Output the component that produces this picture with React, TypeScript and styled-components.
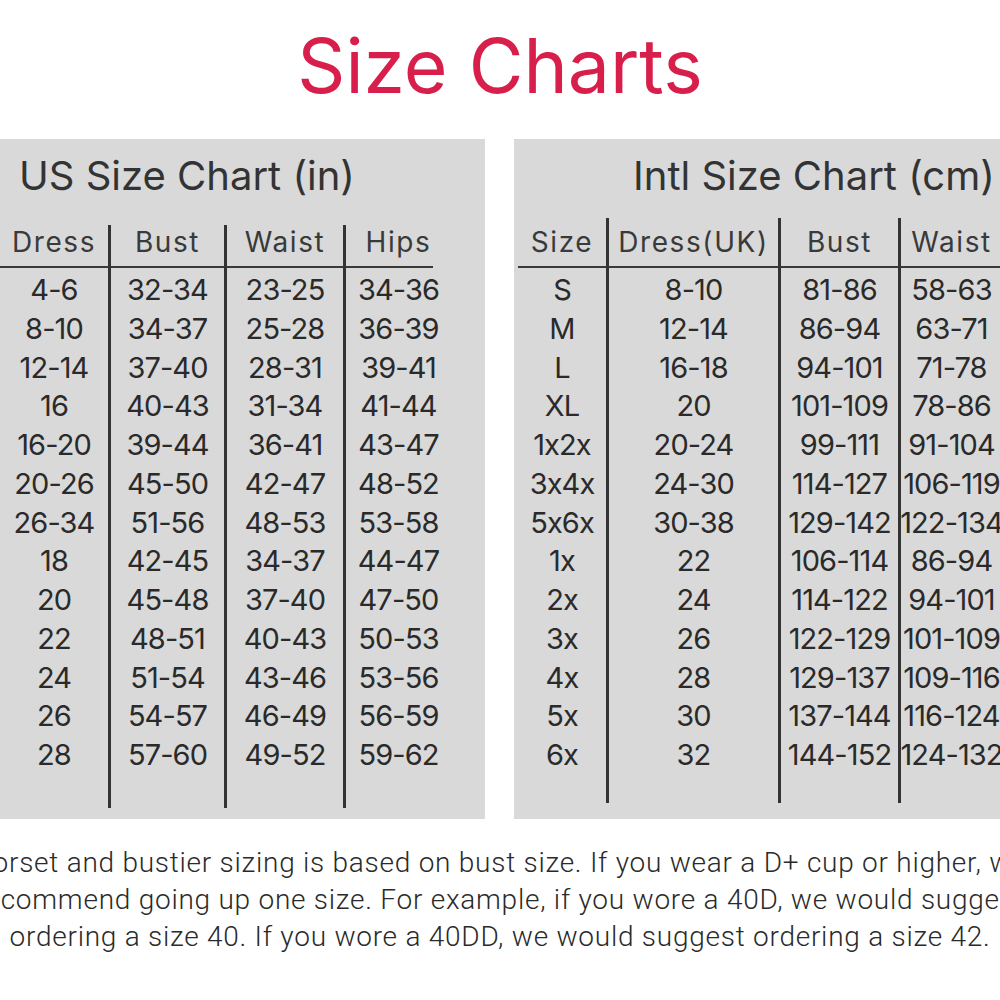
import React from "react";
import styled, { createGlobalStyle } from "styled-components";

const Global = createGlobalStyle`
  html, body { margin: 0; padding: 0; background: #ffffff; }
  * { box-sizing: border-box; }
`;

const Page = styled.div`
  width: 1000px;
  height: 1000px;
  overflow: hidden;
  background: #ffffff;
  display: flex;
  flex-direction: column;
  font-family: Inter, "Open Sans", sans-serif;
  font-feature-settings: "calt" 0;
  color: #2e2e2e;
`;

const Title = styled.h1`
  margin: 0;
  height: 139px;
  padding-top: 28px;
  text-align: center;
  font-family: Inter, sans-serif;
  font-weight: 400;
  font-size: 75px;
  line-height: 1;
  color: #d81f4c;
`;

const Charts = styled.div`
  display: flex;
  gap: 29px;
  height: 680px;
`;

const Panel = styled.section<{ $w: number; $pad: number }>`
  flex: none;
  width: ${(p) => p.$w}px;
  height: 680px;
  background: #d9d9d9;
  overflow: hidden;
  display: flex;
  flex-direction: column;
  padding-left: ${(p) => p.$pad}px;
`;

const Heading = styled.h2<{ $indent: number }>`
  margin: 0;
  padding-top: 12px;
  padding-left: ${(p) => p.$indent}px;
  font-weight: 400;
  font-size: 40px;
  line-height: 50px;
  white-space: nowrap;
  color: #333333;
`;

const Table = styled.div<{ $top: number }>`
  display: flex;
  margin-top: ${(p) => p.$top}px;
`;

const Column = styled.div<{ $w: number; $first?: boolean; $bottom: number }>`
  flex: none;
  width: ${(p) => p.$w}px;
  display: flex;
  flex-direction: column;
  border-left: ${(p) => (p.$first ? "none" : "3px solid #333333")};
  padding-bottom: ${(p) => p.$bottom}px;
`;

const HeadCell = styled.div<{ $h: number; $rule: number; $lift: number }>`
  height: ${(p) => p.$h}px;
  display: flex;
  align-items: center;
  justify-content: center;
  padding-bottom: ${(p) => p.$lift}px;
  font-size: 28px;
  letter-spacing: 1.6px;
  white-space: nowrap;
  color: #3a3a3a;
  background: linear-gradient(#3a3a3a, #3a3a3a) left bottom /
    calc(100% - ${(p) => p.$rule}px) 2px no-repeat;
`;

const Body = styled.div`
  padding-top: 3px;
  display: flex;
  flex-direction: column;
  align-items: center;
`;

const Cell = styled.div`
  height: 38.75px;
  line-height: 38.75px;
  font-size: 29px;
  letter-spacing: -0.9px;
  white-space: nowrap;
  color: #2a2a2a;
`;

const Note = styled.div`
  display: flex;
  flex-direction: column;
  align-items: center;
  padding-top: 25px;
  font-family: Roboto, "Liberation Sans", sans-serif;
  font-weight: 300;
  font-size: 28px;
  letter-spacing: 0.75px;
  line-height: 37px;
  color: #2a2a2a;
`;

const NoteLine = styled.div`
  white-space: nowrap;
`;

type Col = { head: string; w: number; values: string[]; rule?: number };

const usCols: Col[] = [
  { head: "Dress", w: 108, values: ["4-6", "8-10", "12-14", "16", "16-20", "20-26", "26-34", "18", "20", "22", "24", "26", "28"] },
  { head: "Bust", w: 116, values: ["32-34", "34-37", "37-40", "40-43", "39-44", "45-50", "51-56", "42-45", "45-48", "48-51", "51-54", "54-57", "57-60"] },
  { head: "Waist", w: 119, values: ["23-25", "25-28", "28-31", "31-34", "36-41", "42-47", "48-53", "34-37", "37-40", "40-43", "43-46", "46-49", "49-52"] },
  { head: "Hips", w: 108, rule: 18, values: ["34-36", "36-39", "39-41", "41-44", "43-47", "48-52", "53-58", "44-47", "47-50", "50-53", "53-56", "56-59", "59-62"] },
];

const intlCols: Col[] = [
  { head: "Size", w: 88, values: ["S", "M", "L", "XL", "1x2x", "3x4x", "5x6x", "1x", "2x", "3x", "4x", "5x", "6x"] },
  { head: "Dress(UK)", w: 172, values: ["8-10", "12-14", "16-18", "20", "20-24", "24-30", "30-38", "22", "24", "26", "28", "30", "32"] },
  { head: "Bust", w: 120, values: ["81-86", "86-94", "94-101", "101-109", "99-111", "114-127", "129-142", "106-114", "114-122", "122-129", "129-137", "137-144", "144-152"] },
  { head: "Waist", w: 104, values: ["58-63", "63-71", "71-78", "78-86", "91-104", "106-119", "122-134", "86-94", "94-101", "101-109", "109-116", "116-124", "124-132"] },
];

function Chart({
  cols,
  headH,
  lift,
  top,
  bottom,
}: {
  cols: Col[];
  headH: number;
  lift: number;
  top: number;
  bottom: number;
}) {
  return (
    <Table $top={top}>
      {cols.map((c, i) => (
        <Column key={c.head} $w={c.w} $first={i === 0} $bottom={bottom}>
          <HeadCell $h={headH} $rule={c.rule ?? 0} $lift={lift}>
            {c.head}
          </HeadCell>
          <Body>
            {c.values.map((v, j) => (
              <Cell key={j}>{v}</Cell>
            ))}
          </Body>
        </Column>
      ))}
    </Table>
  );
}

export default function App() {
  return (
    <>
      <Global />
      <Page>
        <Title>Size Charts</Title>
        <Charts>
          <Panel $w={485} $pad={0}>
            <Heading $indent={19}>US Size Chart (in)</Heading>
            <Chart cols={usCols} headH={43} lift={9} top={24} bottom={33} />
          </Panel>
          <Panel $w={486} $pad={4}>
            <Heading $indent={115}>Intl Size Chart (cm)</Heading>
            <Chart cols={intlCols} headH={50} lift={3} top={17} bottom={28} />
          </Panel>
        </Charts>
        <Note>
          <NoteLine>Corset and bustier sizing is based on bust size. If you wear a D+ cup or higher, we</NoteLine>
          <NoteLine>recommend going up one size. For example, if you wore a 40D, we would suggest</NoteLine>
          <NoteLine>ordering a size 40. If you wore a 40DD, we would suggest ordering a size 42.</NoteLine>
        </Note>
      </Page>
    </>
  );
}
